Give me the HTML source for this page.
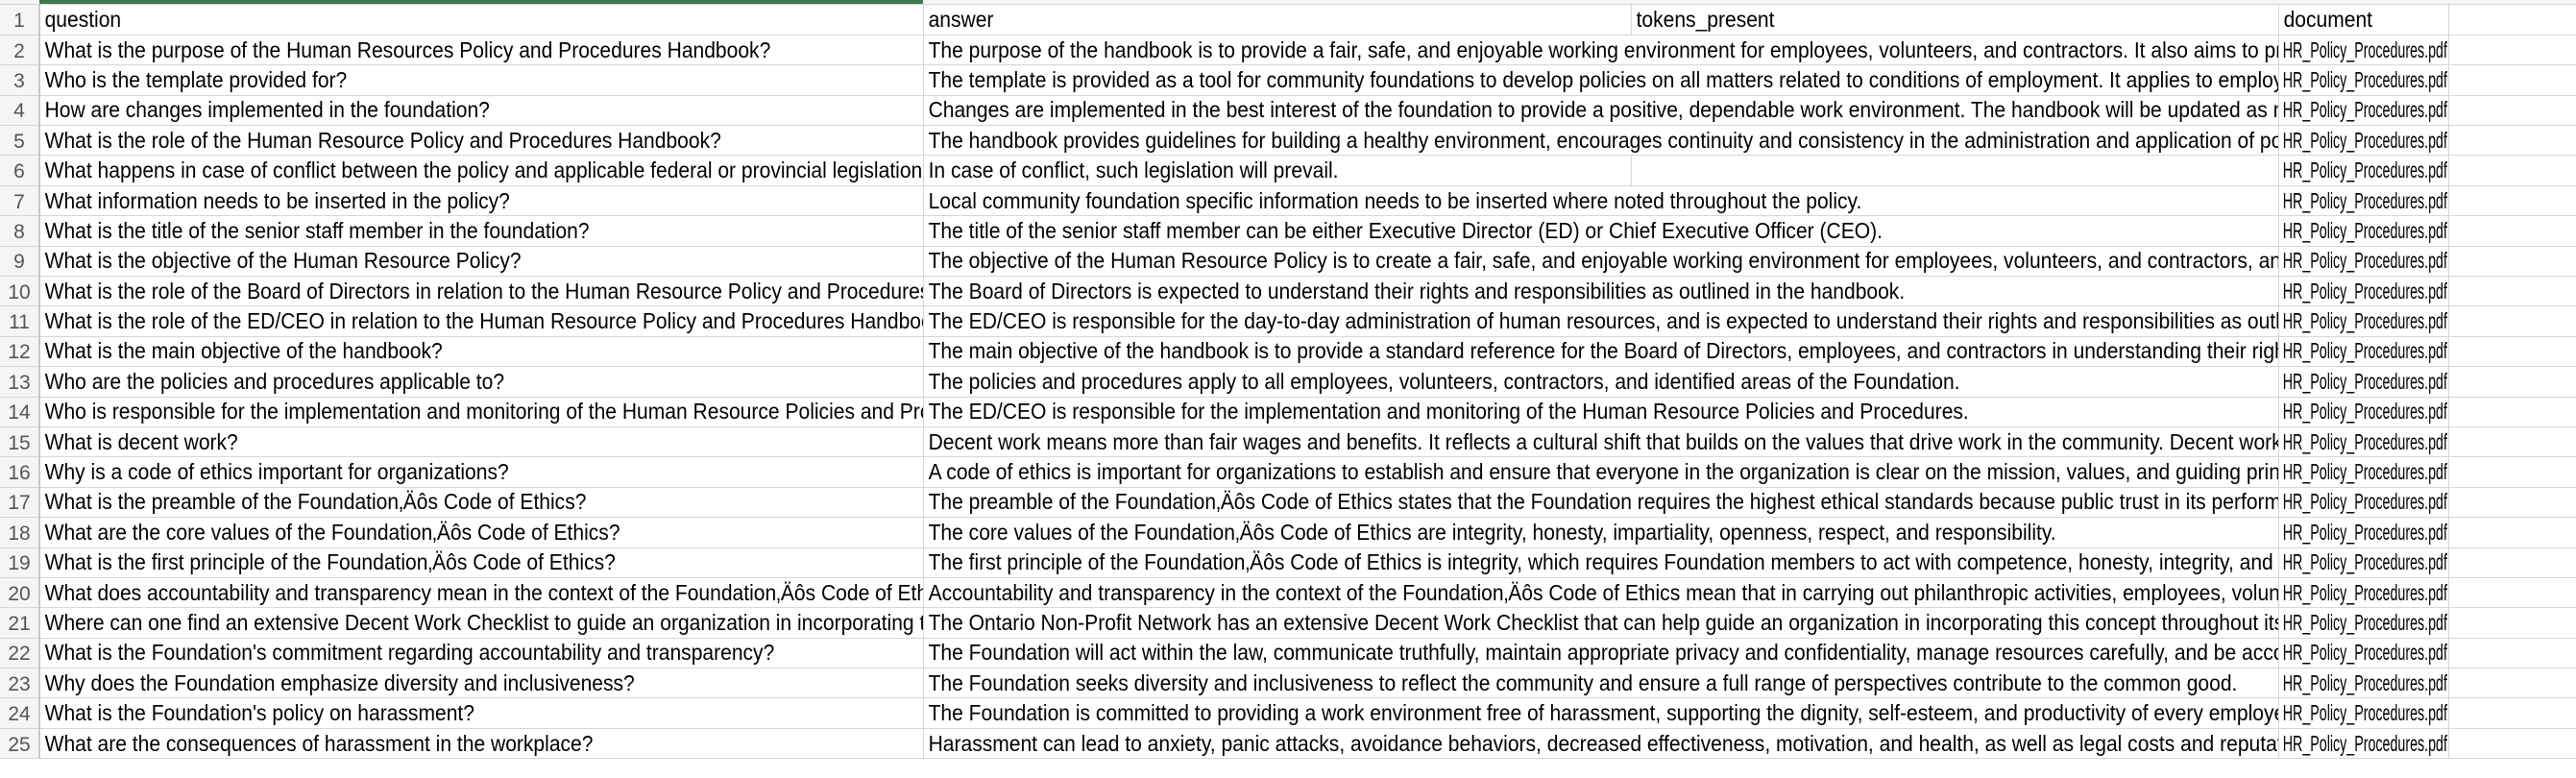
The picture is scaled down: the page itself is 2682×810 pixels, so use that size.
<!DOCTYPE html>
<html><head><meta charset="utf-8"><style>
html,body{margin:0;padding:0;background:#fff;width:2682px;height:810px;overflow:hidden}
.top{position:absolute;left:0;top:0;width:2682px;height:5px;background:#f5f5f5;border-bottom:1px solid #d0d0d0;box-sizing:border-box}
.green{position:absolute;left:41px;top:0;width:920px;height:4px;background:#3d7a4f}
table{position:absolute;left:0;top:5px;width:2682px;max-width:2682px;border-collapse:collapse;table-layout:fixed;font-family:"Liberation Sans",sans-serif;font-size:23px;color:#000}
td{height:31.4px;padding:0;border-right:1px solid #d6d6d6;border-bottom:1px solid #d6d6d6;overflow:hidden;white-space:nowrap;box-sizing:border-box;max-width:0}
td span{display:inline-block;transform:scaleX(0.915);transform-origin:left center;padding-left:5px;white-space:nowrap}
td.d span{transform:scaleX(0.62);padding-left:6px}
td.n{background:#f5f5f5;color:#555;text-align:center;border-right:2px solid #c8c8c8}
td.n span{transform:none;padding:0;font-size:21px}
</style></head><body>
<div class="top"></div><div class="green"></div>
<table>
<colgroup><col style="width:41px"><col style="width:920px"><col style="width:737px"><col style="width:674px"><col style="width:177px"><col style="width:133px"></colgroup>
<tr><td class="n"><span>1</span></td><td><span>question</span></td><td><span>answer</span></td><td><span>tokens_present</span></td><td><span>document</span></td><td></td></tr>
<tr><td class="n"><span>2</span></td><td><span>What is the purpose of the Human Resources Policy and Procedures Handbook?</span></td><td colspan="2"><span>The purpose of the handbook is to provide a fair, safe, and enjoyable working environment for employees, volunteers, and contractors. It also aims to provide guidance</span></td><td class="d"><span>HR_Policy_Procedures.pdf</span></td><td></td></tr>
<tr><td class="n"><span>3</span></td><td><span>Who is the template provided for?</span></td><td colspan="2"><span>The template is provided as a tool for community foundations to develop policies on all matters related to conditions of employment. It applies to employees</span></td><td class="d"><span>HR_Policy_Procedures.pdf</span></td><td></td></tr>
<tr><td class="n"><span>4</span></td><td><span>How are changes implemented in the foundation?</span></td><td colspan="2"><span>Changes are implemented in the best interest of the foundation to provide a positive, dependable work environment. The handbook will be updated as needed</span></td><td class="d"><span>HR_Policy_Procedures.pdf</span></td><td></td></tr>
<tr><td class="n"><span>5</span></td><td><span>What is the role of the Human Resource Policy and Procedures Handbook?</span></td><td colspan="2"><span>The handbook provides guidelines for building a healthy environment, encourages continuity and consistency in the administration and application of policies</span></td><td class="d"><span>HR_Policy_Procedures.pdf</span></td><td></td></tr>
<tr><td class="n"><span>6</span></td><td><span>What happens in case of conflict between the policy and applicable federal or provincial legislation?</span></td><td><span>In case of conflict, such legislation will prevail.</span></td><td></td><td class="d"><span>HR_Policy_Procedures.pdf</span></td><td></td></tr>
<tr><td class="n"><span>7</span></td><td><span>What information needs to be inserted in the policy?</span></td><td colspan="2"><span>Local community foundation specific information needs to be inserted where noted throughout the policy.</span></td><td class="d"><span>HR_Policy_Procedures.pdf</span></td><td></td></tr>
<tr><td class="n"><span>8</span></td><td><span>What is the title of the senior staff member in the foundation?</span></td><td colspan="2"><span>The title of the senior staff member can be either Executive Director (ED) or Chief Executive Officer (CEO).</span></td><td class="d"><span>HR_Policy_Procedures.pdf</span></td><td></td></tr>
<tr><td class="n"><span>9</span></td><td><span>What is the objective of the Human Resource Policy?</span></td><td colspan="2"><span>The objective of the Human Resource Policy is to create a fair, safe, and enjoyable working environment for employees, volunteers, and contractors, and to</span></td><td class="d"><span>HR_Policy_Procedures.pdf</span></td><td></td></tr>
<tr><td class="n"><span>10</span></td><td><span>What is the role of the Board of Directors in relation to the Human Resource Policy and Procedures Handbook?</span></td><td colspan="2"><span>The Board of Directors is expected to understand their rights and responsibilities as outlined in the handbook.</span></td><td class="d"><span>HR_Policy_Procedures.pdf</span></td><td></td></tr>
<tr><td class="n"><span>11</span></td><td><span>What is the role of the ED/CEO in relation to the Human Resource Policy and Procedures Handbook?</span></td><td colspan="2"><span>The ED/CEO is responsible for the day-to-day administration of human resources, and is expected to understand their rights and responsibilities as outlined</span></td><td class="d"><span>HR_Policy_Procedures.pdf</span></td><td></td></tr>
<tr><td class="n"><span>12</span></td><td><span>What is the main objective of the handbook?</span></td><td colspan="2"><span>The main objective of the handbook is to provide a standard reference for the Board of Directors, employees, and contractors in understanding their rights</span></td><td class="d"><span>HR_Policy_Procedures.pdf</span></td><td></td></tr>
<tr><td class="n"><span>13</span></td><td><span>Who are the policies and procedures applicable to?</span></td><td colspan="2"><span>The policies and procedures apply to all employees, volunteers, contractors, and identified areas of the Foundation.</span></td><td class="d"><span>HR_Policy_Procedures.pdf</span></td><td></td></tr>
<tr><td class="n"><span>14</span></td><td><span>Who is responsible for the implementation and monitoring of the Human Resource Policies and Procedures?</span></td><td colspan="2"><span>The ED/CEO is responsible for the implementation and monitoring of the Human Resource Policies and Procedures.</span></td><td class="d"><span>HR_Policy_Procedures.pdf</span></td><td></td></tr>
<tr><td class="n"><span>15</span></td><td><span>What is decent work?</span></td><td colspan="2"><span>Decent work means more than fair wages and benefits. It reflects a cultural shift that builds on the values that drive work in the community. Decent work</span></td><td class="d"><span>HR_Policy_Procedures.pdf</span></td><td></td></tr>
<tr><td class="n"><span>16</span></td><td><span>Why is a code of ethics important for organizations?</span></td><td colspan="2"><span>A code of ethics is important for organizations to establish and ensure that everyone in the organization is clear on the mission, values, and guiding principles</span></td><td class="d"><span>HR_Policy_Procedures.pdf</span></td><td></td></tr>
<tr><td class="n"><span>17</span></td><td><span>What is the preamble of the Foundation‚Äôs Code of Ethics?</span></td><td colspan="2"><span>The preamble of the Foundation‚Äôs Code of Ethics states that the Foundation requires the highest ethical standards because public trust in its performance</span></td><td class="d"><span>HR_Policy_Procedures.pdf</span></td><td></td></tr>
<tr><td class="n"><span>18</span></td><td><span>What are the core values of the Foundation‚Äôs Code of Ethics?</span></td><td colspan="2"><span>The core values of the Foundation‚Äôs Code of Ethics are integrity, honesty, impartiality, openness, respect, and responsibility.</span></td><td class="d"><span>HR_Policy_Procedures.pdf</span></td><td></td></tr>
<tr><td class="n"><span>19</span></td><td><span>What is the first principle of the Foundation‚Äôs Code of Ethics?</span></td><td colspan="2"><span>The first principle of the Foundation‚Äôs Code of Ethics is integrity, which requires Foundation members to act with competence, honesty, integrity, and fairness</span></td><td class="d"><span>HR_Policy_Procedures.pdf</span></td><td></td></tr>
<tr><td class="n"><span>20</span></td><td><span>What does accountability and transparency mean in the context of the Foundation‚Äôs Code of Ethics?</span></td><td colspan="2"><span>Accountability and transparency in the context of the Foundation‚Äôs Code of Ethics mean that in carrying out philanthropic activities, employees, volunteers</span></td><td class="d"><span>HR_Policy_Procedures.pdf</span></td><td></td></tr>
<tr><td class="n"><span>21</span></td><td><span>Where can one find an extensive Decent Work Checklist to guide an organization in incorporating this concept?</span></td><td colspan="2"><span>The Ontario Non-Profit Network has an extensive Decent Work Checklist that can help guide an organization in incorporating this concept throughout its work</span></td><td class="d"><span>HR_Policy_Procedures.pdf</span></td><td></td></tr>
<tr><td class="n"><span>22</span></td><td><span>What is the Foundation's commitment regarding accountability and transparency?</span></td><td colspan="2"><span>The Foundation will act within the law, communicate truthfully, maintain appropriate privacy and confidentiality, manage resources carefully, and be accountable</span></td><td class="d"><span>HR_Policy_Procedures.pdf</span></td><td></td></tr>
<tr><td class="n"><span>23</span></td><td><span>Why does the Foundation emphasize diversity and inclusiveness?</span></td><td colspan="2"><span>The Foundation seeks diversity and inclusiveness to reflect the community and ensure a full range of perspectives contribute to the common good.</span></td><td class="d"><span>HR_Policy_Procedures.pdf</span></td><td></td></tr>
<tr><td class="n"><span>24</span></td><td><span>What is the Foundation's policy on harassment?</span></td><td colspan="2"><span>The Foundation is committed to providing a work environment free of harassment, supporting the dignity, self-esteem, and productivity of every employee</span></td><td class="d"><span>HR_Policy_Procedures.pdf</span></td><td></td></tr>
<tr><td class="n"><span>25</span></td><td><span>What are the consequences of harassment in the workplace?</span></td><td colspan="2"><span>Harassment can lead to anxiety, panic attacks, avoidance behaviors, decreased effectiveness, motivation, and health, as well as legal costs and reputational damage</span></td><td class="d"><span>HR_Policy_Procedures.pdf</span></td><td></td></tr>
</table>
</body></html>
